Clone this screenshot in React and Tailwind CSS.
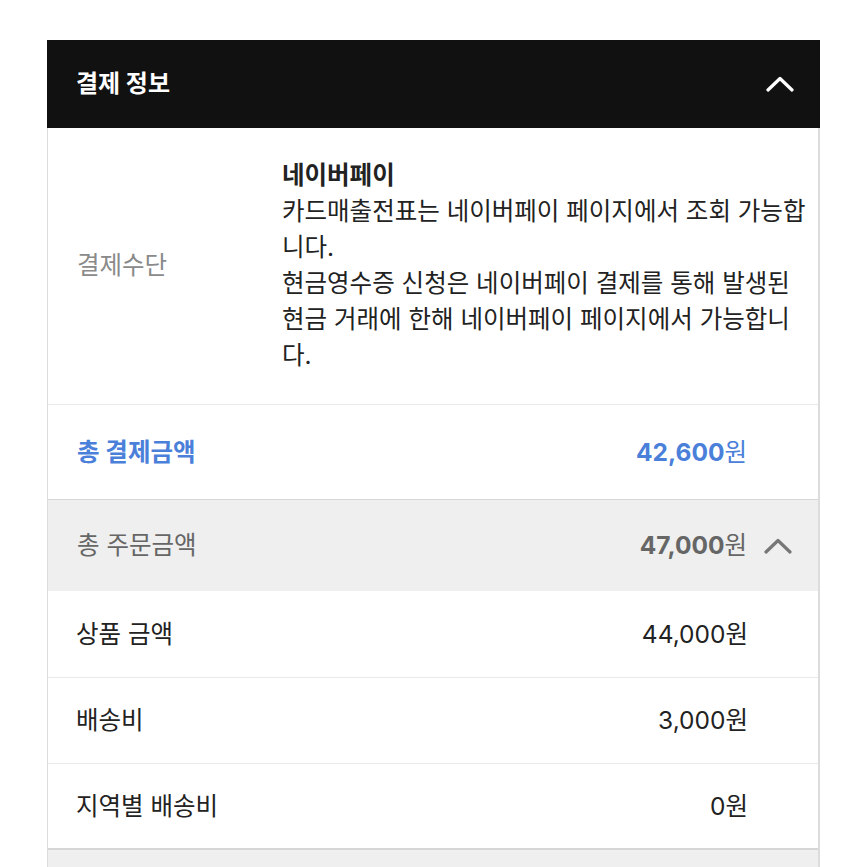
import React from "react";

const FONT = { fontFamily: 'Inter, "Noto Sans CJK KR", sans-serif' };

function Chevron({ color, className }) {
  return (
    <svg className={className} width="28" height="16" viewBox="0 0 28 16" fill="none">
      <polyline points="2,14 14,2.5 26,14" stroke={color} strokeWidth="3.2" strokeLinecap="round" strokeLinejoin="round" />
    </svg>
  );
}

function Row({ label, value, bg = "bg-white", border = "border-[#e9e9e9]", h = "h-[86px]" }) {
  return (
    <div className={`flex items-center justify-between ${h} ${bg} border-b ${border} pl-[28px] pr-[70px]`}>
      <span className="text-[24.5px] text-[#222]">{label}</span>
      <span className="text-[24.5px] text-[#222]">{value}</span>
    </div>
  );
}

export default function App() {
  return (
    <div className="min-h-screen bg-white pt-[40px] pl-[47px]" style={FONT}>
      <div className="w-[773px]">
        <div className="flex h-[88px] items-center justify-between bg-[#111111] pl-[29px] pr-[26px]">
          <span className="text-[24px] font-bold text-white">결제 정보</span>
          <Chevron color="#ffffff" />
        </div>
        <div className="border-l border-r-2 border-[#dcdcdc]">
          <div className="flex border-b border-[#e9e9e9] pt-[29px] pb-[31px]">
            <div className="flex w-[234px] shrink-0 items-center pl-[29px] text-[24.5px] text-[#8a8a8a]">결제수단</div>
            <div className="text-[24.5px] leading-[36px] text-[#222] whitespace-nowrap">
              <div className="font-bold">네이버페이</div>
              <div>카드매출전표는 네이버페이 페이지에서 조회 가능합</div>
              <div>니다.</div>
              <div>현금영수증 신청은 네이버페이 결제를 통해 발생된</div>
              <div>현금 거래에 한해 네이버페이 페이지에서 가능합니</div>
              <div>다.</div>
            </div>
          </div>
          <div className="flex h-[95px] items-center justify-between border-b border-[#d6d6d6] pl-[29px] pr-[71px]">
            <span className="text-[24.5px] font-bold text-[#4a80d9]">총 결제금액</span>
            <span className="text-[24.5px] text-[#4a80d9]">
              <span className="font-bold">42,600</span>원
            </span>
          </div>
          <div className="flex h-[91px] items-center justify-between bg-[#efefef] pl-[29px] pr-[26px]">
            <span className="text-[24.5px] text-[#666]">총 주문금액</span>
            <div className="flex items-center gap-[17px]">
              <span className="text-[24.5px] text-[#666]">
                <span className="font-bold">47,000</span>원
              </span>
              <Chevron color="#777777" />
            </div>
          </div>
          <Row label="상품 금액" value="44,000원" h="h-[87px]" />
          <Row label="배송비" value="3,000원" />
          <Row label="지역별 배송비" value="0원" border="border-[#d6d6d6] border-b-2" />
          <div className="h-[40px] bg-[#efefef]" />
        </div>
      </div>
    </div>
  );
}
